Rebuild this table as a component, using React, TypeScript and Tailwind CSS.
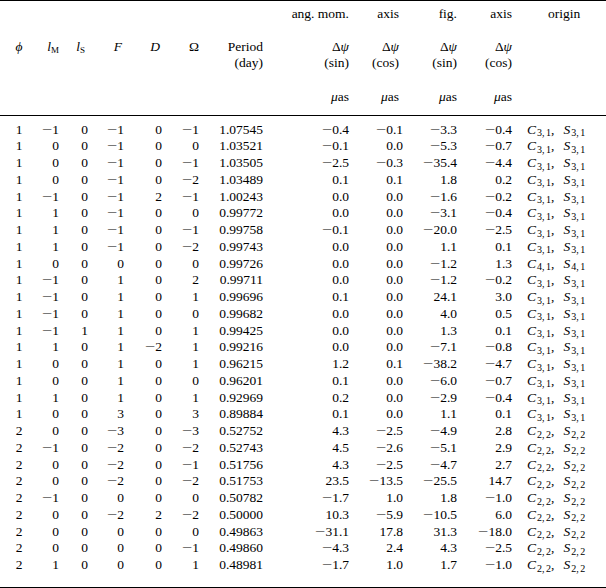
import React from 'react';

type Row = [number, number, number, number, number, number, string, string, string, string, string, string];

const rows: Row[] = [
  [1, -1, 0, -1, 0, -1, '1.07545', '-0.4', '-0.1', '-3.3', '-0.4', '3,1'],
  [1, 0, 0, -1, 0, 0, '1.03521', '-0.1', '0.0', '-5.3', '-0.7', '3,1'],
  [1, 0, 0, -1, 0, -1, '1.03505', '-2.5', '-0.3', '-35.4', '-4.4', '3,1'],
  [1, 0, 0, -1, 0, -2, '1.03489', '0.1', '0.1', '1.8', '0.2', '3,1'],
  [1, -1, 0, -1, 2, -1, '1.00243', '0.0', '0.0', '-1.6', '-0.2', '3,1'],
  [1, 1, 0, -1, 0, 0, '0.99772', '0.0', '0.0', '-3.1', '-0.4', '3,1'],
  [1, 1, 0, -1, 0, -1, '0.99758', '-0.1', '0.0', '-20.0', '-2.5', '3,1'],
  [1, 1, 0, -1, 0, -2, '0.99743', '0.0', '0.0', '1.1', '0.1', '3,1'],
  [1, 0, 0, 0, 0, 0, '0.99726', '0.0', '0.0', '-1.2', '1.3', '4,1'],
  [1, -1, 0, 1, 0, 2, '0.99711', '0.0', '0.0', '-1.2', '-0.2', '3,1'],
  [1, -1, 0, 1, 0, 1, '0.99696', '0.1', '0.0', '24.1', '3.0', '3,1'],
  [1, -1, 0, 1, 0, 0, '0.99682', '0.0', '0.0', '4.0', '0.5', '3,1'],
  [1, -1, 1, 1, 0, 1, '0.99425', '0.0', '0.0', '1.3', '0.1', '3,1'],
  [1, 1, 0, 1, -2, 1, '0.99216', '0.0', '0.0', '-7.1', '-0.8', '3,1'],
  [1, 0, 0, 1, 0, 1, '0.96215', '1.2', '0.1', '-38.2', '-4.7', '3,1'],
  [1, 0, 0, 1, 0, 0, '0.96201', '0.1', '0.0', '-6.0', '-0.7', '3,1'],
  [1, 1, 0, 1, 0, 1, '0.92969', '0.2', '0.0', '-2.9', '-0.4', '3,1'],
  [1, 0, 0, 3, 0, 3, '0.89884', '0.1', '0.0', '1.1', '0.1', '3,1'],
  [2, 0, 0, -3, 0, -3, '0.52752', '4.3', '-2.5', '-4.9', '2.8', '2,2'],
  [2, -1, 0, -2, 0, -2, '0.52743', '4.5', '-2.6', '-5.1', '2.9', '2,2'],
  [2, 0, 0, -2, 0, -1, '0.51756', '4.3', '-2.5', '-4.7', '2.7', '2,2'],
  [2, 0, 0, -2, 0, -2, '0.51753', '23.5', '-13.5', '-25.5', '14.7', '2,2'],
  [2, -1, 0, 0, 0, 0, '0.50782', '-1.7', '1.0', '1.8', '-1.0', '2,2'],
  [2, 0, 0, -2, 2, -2, '0.50000', '10.3', '-5.9', '-10.5', '6.0', '2,2'],
  [2, 0, 0, 0, 0, 0, '0.49863', '-31.1', '17.8', '31.3', '-18.0', '2,2'],
  [2, 0, 0, 0, 0, -1, '0.49860', '-4.3', '2.4', '4.3', '-2.5', '2,2'],
  [2, 1, 0, 0, 0, 1, '0.48981', '-1.7', '1.0', '1.7', '-1.0', '2,2'],
];

const grid = 'grid grid-cols-[38px_21px_29px_36px_38px_37px_64px_86px_54px_54px_55px_1fr] h-[16.75px] leading-[16.75px]';

// wide TeX-style minus
function Num({ v }: { v: string | number }) {
  const s = String(v);
  if (s.startsWith('-')) {
    return (
      <span>
        <span className="inline-block w-[10.5px] text-center scale-x-[1.35]">−</span>
        {s.slice(1)}
      </span>
    );
  }
  return <span>{s}</span>;
}

function Sub({ sub }: { sub: string }) {
  const [a, b] = sub.split(',');
  return (
    <sub className="text-[10px] ml-[1px]">
      {a},<span className="ml-[1.5px]">{b}</span>
    </sub>
  );
}

function Origin({ sub }: { sub: string }) {
  return (
    <span className="whitespace-nowrap">
      <i>C</i>
      <Sub sub={sub} />
      <span>,</span>
      <span className="inline-block w-[9px]" />
      <i>S</i>
      <Sub sub={sub} />
    </span>
  );
}

function DPsi() {
  return (
    <span>
      Δ<i>ψ</i>
    </span>
  );
}

function MuAs() {
  return (
    <span>
      <i>μ</i>as
    </span>
  );
}

export default function App() {
  return (
    <div className="w-[606px] h-[588px] bg-white text-black font-[family-name:Liberation_Serif,serif] text-[13.5px]">
      <div className="border-t border-black" />

      {/* Header */}
      <div className="h-[114px] pt-[4.6px] flex flex-col">
        <div className={grid}>
          <span className="col-start-8 text-right">ang. mom.</span>
          <span className="text-right pr-[4px]">axis</span>
          <span className="text-right">fig.</span>
          <span className="text-right">axis</span>
          <span className="pl-[36px]">origin</span>
        </div>
        <div className={`${grid} mt-[16.25px]`}>
          <span className="text-center"><i>ϕ</i></span>
          <span className="text-right"><i>l</i><sub className="text-[9px]">M</sub></span>
          <span className="text-right pr-[3px]"><i>l</i><sub className="text-[9px]">S</sub></span>
          <span className="text-right pr-[2px]"><i>F</i></span>
          <span className="text-right pr-[2px]"><i>D</i></span>
          <span className="text-right">Ω</span>
          <span className="text-right">Period</span>
          <span className="text-right"><DPsi /></span>
          <span className="text-right pr-[4px]"><DPsi /></span>
          <span className="text-right"><DPsi /></span>
          <span className="text-right"><DPsi /></span>
        </div>
        <div className={grid}>
          <span className="col-start-7 text-right">(day)</span>
          <span className="text-right">(sin)</span>
          <span className="text-right pr-[4px]">(cos)</span>
          <span className="text-right">(sin)</span>
          <span className="text-right">(cos)</span>
        </div>
        <div className={`${grid} mt-[16.5px]`}>
          <span className="col-start-8 text-right"><MuAs /></span>
          <span className="text-right pr-[4px]"><MuAs /></span>
          <span className="text-right"><MuAs /></span>
          <span className="text-right"><MuAs /></span>
        </div>
      </div>

      <div className="border-t border-black" />

      {/* Data */}
      <div className="pt-[5.6px] pb-[13px] flex flex-col">
        {rows.map((r, i) => (
          <div key={i} className={grid}>
            <span className="text-center">{r[0]}</span>
            <span className="text-right"><Num v={r[1]} /></span>
            <span className="text-right"><Num v={r[2]} /></span>
            <span className="text-right"><Num v={r[3]} /></span>
            <span className="text-right"><Num v={r[4]} /></span>
            <span className="text-right"><Num v={r[5]} /></span>
            <span className="text-right">{r[6]}</span>
            <span className="text-right"><Num v={r[7]} /></span>
            <span className="text-right"><Num v={r[8]} /></span>
            <span className="text-right"><Num v={r[9]} /></span>
            <span className="text-right"><Num v={r[10]} /></span>
            <span className="pl-[15px]"><Origin sub={r[11]} /></span>
          </div>
        ))}
      </div>

      <div className="border-t border-black" />
    </div>
  );
}
